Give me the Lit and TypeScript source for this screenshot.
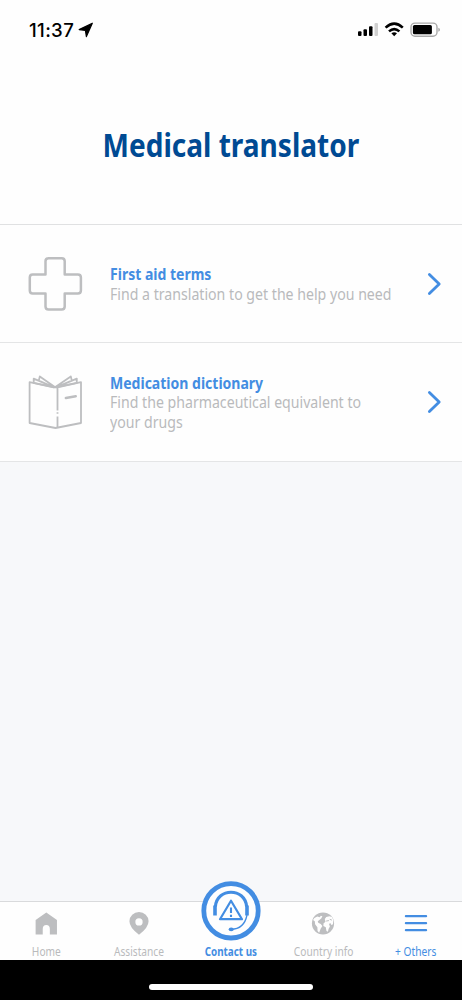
import { LitElement, html, css, svg } from "lit";
import { customElement, property } from "lit/decorators.js";

const firstAid = svg`<svg class="pic" width="56" height="56" viewBox="0 0 56 56" fill="none" stroke="#bdbec0" stroke-width="2.5" stroke-linejoin="round">
  <path d="M21.3 2.2H34.7Q37.7 2.2 37.7 5.2V18.6H50.9Q53.9 18.6 53.9 21.6V34.6Q53.9 37.6 50.9 37.6H37.7V50.6Q37.7 53.6 34.7 53.6H21.5Q18.5 53.6 18.5 50.6V37.6H5.6Q2.8 37.6 2.8 34.6V21.6Q2.8 18.6 5.6 18.6H18.5V5.2Q18.5 2.2 21.5 2.2Z"/></svg>`;

const book = svg`<svg class="pic" width="56" height="56" viewBox="0 0 56 56" fill="none" stroke="#bdbec0" stroke-width="1.8" stroke-linejoin="round">
  <path d="M30.5 36.6V13.4L54 8.2V49L28.5 54L2.6 49V8.2L26.6 13.4H30.5"/>
  <path d="M30.5 38.2v1.6M30.5 42.4v11.2"/>
  <path d="M26.8 13.2L6.7 8.8V4.6L26.8 13.2L11.8 6.6L12.8 2.4L28.2 13.2"/>
  <path d="M29.4 13.2L49.8 8.8V4.6L29.4 13.2L44.8 6.6L43.8 2.4L28 13.2"/>
  <path d="M38.9 24L48.7 22.2" stroke-width="2.6" stroke-linecap="round"/></svg>`;

@customElement("menu-row")
export class MenuRow extends LitElement {
  @property() label = "";
  @property({ attribute: false }) lines: string[] = [];
  @property({ attribute: false }) picture: unknown;

  static styles = css`
    :host { display: flex; height: 117.33px; align-items: center; background: #fefefe; border-bottom: 1px solid #e4e5e6; box-sizing: content-box; }
    .pic { display: block; margin: 0 0 0 27px; flex: none; }
    .copy { margin-left: 27px; width: 290px; flex: none; line-height: 19.5px; font-size: 16.8px; white-space: nowrap; padding-top: .4px; }
    .title { font-weight: 700; color: #438de2; font-size: 16.4px; transform: scaleX(.855); transform-origin: 0 0; width: max-content; }
    .line { color: #b9babc; transform: scaleX(.842); transform-origin: 0 0; width: max-content; }
    .arrow { display: block; margin: 1px 0 0 27px; }
  `;

  render() {
    return html`${this.picture}
      <div class="copy">
        <div class="title">${this.label}</div>
        ${this.lines.map((l) => html`<div class="line">${l}</div>`)}
      </div>
      <svg class="arrow" width="15" height="24" viewBox="0 0 15 24" fill="none" stroke="#438de2" stroke-width="2.8" stroke-linecap="round" stroke-linejoin="round"><path d="M2.4 2.4L12.2 12L2.4 21.6"/></svg>`;
  }
}

@customElement("app-root")
export class AppRoot extends LitElement {
  static styles = css`
    :host { display: flex; flex-direction: column; width: 462px; height: 1000px; overflow: hidden; background: #f7f8fa; font-family: "Noto Sans", sans-serif; }
    .status { display: flex; height: 60px; background: #fefefe; align-items: center; padding-left: 29px; box-sizing: border-box; flex: none; }
    .time { font: 500 18.6px Inter, sans-serif; width: 46px; white-space: nowrap; letter-spacing: .35px; }
    .loc { margin-left: 3px; }
    .signals { display: flex; margin-left: auto; }
    .heading { height: 164px; display: flex; justify-content: center; background: #fefefe; border-bottom: 1px solid #e0e1e2; flex: none; }
    h1 { margin: 62px 0 0; font-size: 32.3px; line-height: 44px; color: #004a93; transform: scaleX(.868); white-space: nowrap; }
    .space { flex: 1; }
    .tabs { display: grid; grid-template-columns: repeat(5, 92.4px); height: 57.5px; background: #fefefe; border-top: 1px solid #d9dadc; flex: none; }
    .tab { display: flex; flex-direction: column; align-items: center; color: #b9babc; font-size: 12.2px; line-height: 16px; white-space: nowrap; }
    .tab svg { height: 41.5px; display: block; flex: none; }
    .tab span { transform: scaleX(.835); }
    .tab.on { color: #438de2; }
    .tab.main { font-weight: 700; font-size: 12px; }
    .tab.main svg { height: 62px; margin-top: -21px; margin-bottom: .5px; }
    .tab.main span { transform: scaleX(.82); }
    .bottom { height: 40.5px; background: #000; display: flex; justify-content: center; flex: none; }
    .bar { width: 164px; height: 6px; border-radius: 3px; background: #fff; margin-top: 24.5px; }
  `;

  render() {
    return html`
      <div class="status">
        <div class="time">11:37</div>
        <svg class="loc" width="16" height="16" viewBox="0 0 16 16"><path d="M14.3 1.2L1.2 7.6L7.4 8.5L8.4 14.6Z" fill="#000" stroke="#000" stroke-width="1.2" stroke-linejoin="round"/></svg>
        <div class="signals">
          <svg width="106" height="20" viewBox="356 20 106 20">
            <g fill="#000"><rect x="358" y="31.3" width="3.5" height="4.8" rx="1"/><rect x="363.5" y="29.2" width="3.5" height="6.9" rx="1"/><rect x="369" y="26.2" width="3.5" height="9.9" rx="1"/><rect x="374.5" y="23" width="3.5" height="13.1" rx="1" fill="#d0d0d0"/></g>
            <g fill="none" stroke="#000" stroke-width="2.6"><path d="M385.6 27.6Q394.2 19.7 402.8 27.6"/><path d="M389 31.4Q394.2 26.8 399.4 31.4"/></g>
            <path d="M391.4 33.3Q394.2 31 397 33.3L394.2 36.3Z"/>
            <rect x="411" y="23.1" width="26" height="13.2" rx="4" fill="none" stroke="#a9a9a9" stroke-width="1.4"/>
            <rect x="412.9" y="24.9" width="19" height="9.4" rx="1.6"/>
            <path d="M438.3 27.8Q440 28.4 440 29.7T438.3 31.7Z" fill="#a9a9a9"/>
          </svg>
        </div>
      </div>
      <div class="heading"><h1>Medical translator</h1></div>
      <menu-row label="First aid terms" .lines=${["Find a translation to get the help you need"]} .picture=${firstAid}></menu-row>
      <menu-row label="Medication dictionary" .lines=${["Find the pharmaceutical equivalent to", "your drugs"]} .picture=${book}></menu-row>
      <div class="space"></div>
      <div class="tabs">
        <div class="tab">
          <svg width="24" height="42" viewBox="0 0 24 42"><path d="M12.3 10.7L23.1 18.2V33H15.9V27.4Q15.9 23.4 12.3 23.4T8.7 27.4V33H1.5V18.2Z" fill="#bdbec0"/></svg>
          <span>Home</span>
        </div>
        <div class="tab">
          <svg width="24" height="42" viewBox="0 0 24 42"><path fill-rule="evenodd" d="M12 33.2Q2.3 25.8 2.3 19.5A9.7 9.3 0 0 1 21.7 19.5Q21.7 25.8 12 33.2ZM12 16.5a3.7 3.7 0 1 0 0 7.4a3.7 3.7 0 1 0 0-7.4Z" fill="#bdbec0"/></svg>
          <span>Assistance</span>
        </div>
        <div class="tab on main">
          <svg width="62" height="62" viewBox="0 0 62 62" fill="none" stroke="#438de2">
            <circle cx="31" cy="29.8" r="27.2" fill="#fefefe" stroke-width="4.8"/>
            <path d="M15.4 25.5C17 6.5 45 6.5 46.6 25.5" stroke-width="3.1"/>
            <path d="M15 24.5V34.5M47 24.5V34.5" stroke-width="3.6"/>
            <path d="M47 34C45 44 39 48.2 31 48.4" stroke-width="1.3"/>
            <ellipse cx="31.2" cy="48.4" rx="2.6" ry="1.8" fill="#438de2" stroke="none"/>
            <path d="M31 19.7L42 38.2H20Z" stroke-width="2.2" stroke-linejoin="round"/>
            <path d="M31 26.6V32M31 33.7V35.9" stroke-width="2.1"/>
          </svg>
          <span>Contact us</span>
        </div>
        <div class="tab">
          <svg width="24" height="42" viewBox="0 0 24 42"><circle cx="12" cy="21.7" r="11.2" fill="#bdbec0"/>
            <path fill="#fefefe" d="M3.3 16.2L6.2 14.8L8.7 15.4L9.8 13.8L11.4 14.4L10.2 16.7L8.3 18.2L6.7 19.4L7.2 21L9.7 22.3L11.4 24.3L9.6 27L8.1 31L6.5 29.3L6.3 25.5L4 22.5L3.7 19.5L1.9 18.1Z"/>
            <path fill="#fefefe" d="M13.8 17.3L15.3 15.1L18.5 14.5L21 15.3L22.5 18.2L22.1 22.6L20.5 23.4L19.4 21.2L18.1 22.2L19 24.7L17.6 27.2L17 30L15.5 29.4L14.8 25.5L12.4 24.4L12.5 21.7L14.5 20.1Z"/>
            <path d="M15.2 19.3L18 18.8M18.8 17.5L21 18.3" stroke="#bdbec0" stroke-width="1"/></svg>
          <span>Country info</span>
        </div>
        <div class="tab on">
          <svg width="24" height="42" viewBox="0 0 24 42" stroke="#438de2" stroke-width="2.3" stroke-linecap="round"><path d="M1.8 14.3H22.2M1.8 21.4H22.2M1.8 28.5H22.2"/></svg>
          <span>+ Others</span>
        </div>
      </div>
      <div class="bottom"><div class="bar"></div></div>
    `;
  }
}
